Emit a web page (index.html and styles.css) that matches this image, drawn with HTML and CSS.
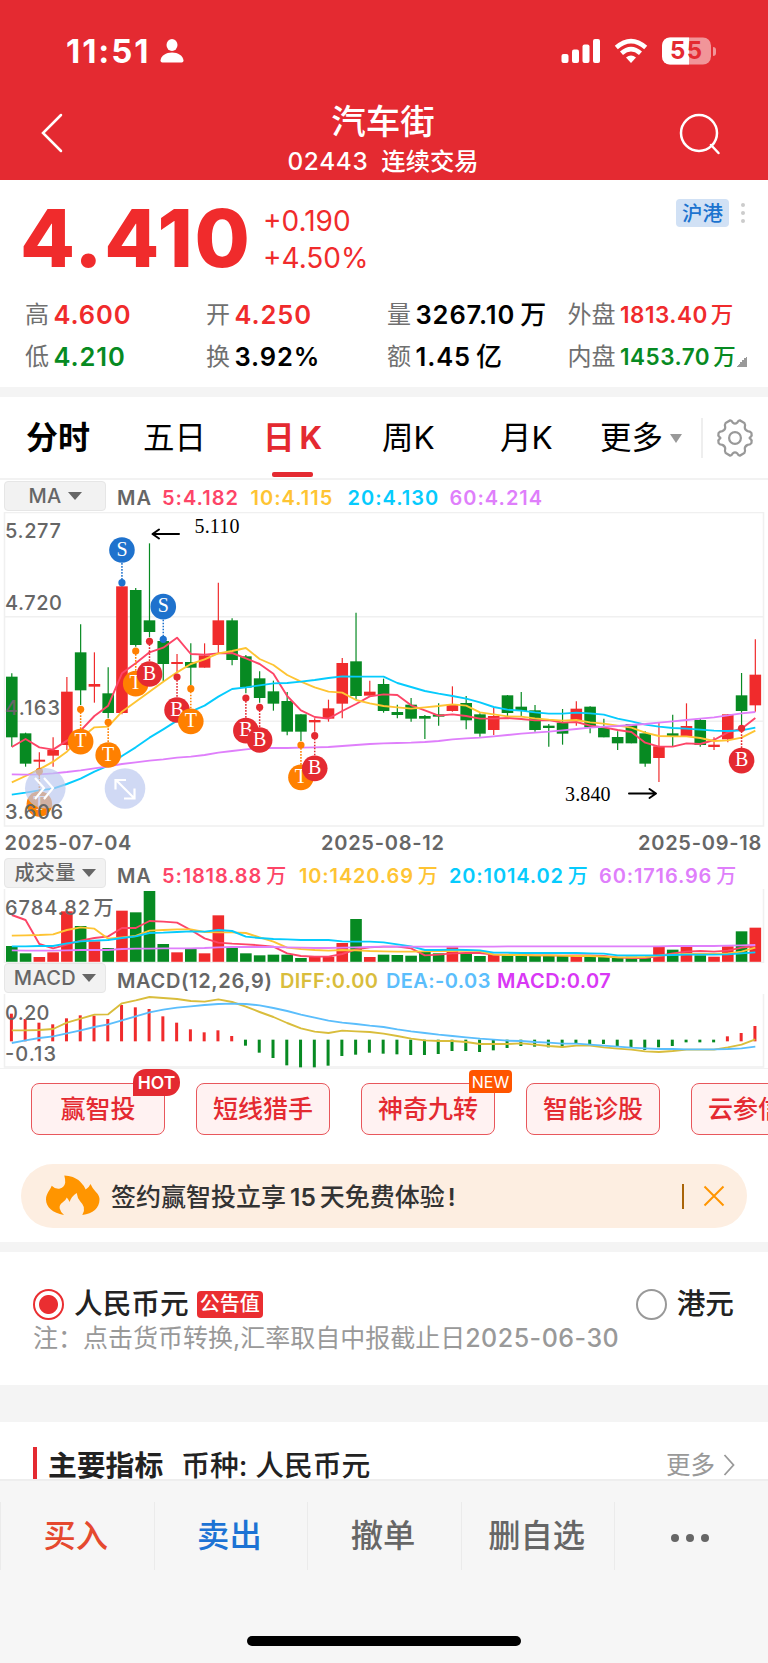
FILE: index.html
```html
<!DOCTYPE html>
<html lang="zh-CN">
<head>
<meta charset="utf-8">
<title>汽车街 02443</title>
<link rel="stylesheet" href="styles.css">
</head>
<body>
<div class="app">
  <header class="header">
    <div class="status">
      <span class="clock">11:51</span>
      <svg class="person" width="24" height="24" viewBox="0 0 24 24"><ellipse cx="12" cy="6" rx="5.5" ry="6"/><path d="M0.5 21.5C1 16.500 6 13.500 12 13.500s11 3 11.500 8q0 1.900-1.800 1.900H2.300Q0.500 23.400 0.500 21.500z"/></svg>
      <svg class="radios" width="152" height="30" viewBox="0 0 152 30">
        <rect x="1.500" y="18" width="7" height="9" rx="2"/><rect x="12" y="13.500" width="7" height="13.500" rx="2"/><rect x="22.500" y="8.500" width="7" height="18.500" rx="2"/><rect x="33" y="3" width="7" height="24" rx="2"/>
        <path d="M71 27l-5-5.500q5-4 10 0z"/>
        <path d="M61.500 17.200q9.500-8.200 19 0M56.300 11.600q14.700-12.800 29.400 0" class="wifi"/>
        <rect x="102" y="1.500" width="49" height="27" rx="8" class="bat-bg"/>
        <path d="M110 1.500h19v27h-19a8 8 0 0 1-8-8v-11a8 8 0 0 1 8-8z"/>
        <text x="110" y="23.300" class="bat-num" textLength="32">55</text>
      </svg>
      <i class="bat-tip"></i>
    </div>
    <div class="titlebar">
      <svg class="back" width="24" height="40" viewBox="0 0 24 40"><path d="M21 2L3 20l18 18"/></svg>
      <div class="titles"><h1>汽车街</h1><p><span class="code">02443</span><span>连续交易</span></p></div>
      <svg class="search" width="44" height="44" viewBox="0 0 44 44"><circle cx="21" cy="21" r="18"/><path d="M33 33l7.500 8"/></svg>
    </div>
  </header>

  <section class="quote">
    <div class="price-row">
      <strong class="price">4.410</strong>
      <div class="chg"><span>+0.190</span><span>+4.50%</span></div>
      <span class="market">沪港</span>
      <span class="kebab"><i></i><i></i><i></i></span>
    </div>
    <div class="stats">
      <div><label>高</label><b class="up">4.600</b></div><div><label>开</label><b class="up">4.250</b></div><div><label>量</label><b>3267.10<em>万</em></b></div><div class="small"><label>外盘</label><b class="up">1813.40<em>万</em></b></div>
      <div><label>低</label><b class="down">4.210</b></div><div><label>换</label><b>3.92%</b></div><div><label>额</label><b>1.45<em>亿</em></b></div><div class="small"><label>内盘</label><b class="down">1453.70<em>万</em></b><i class="corner"></i></div>
    </div>
  </section>

  <nav class="tabs">
    <span class="bold">分时</span><span>五日</span><span class="active">日<em>K</em></span><span>周K</span><span>月K</span><span>更多<i class="tri"></i></span>
    <svg class="gear" width="34" height="36" viewBox="0 0 34 36"><path d="M12.500 2.200Q14 2 15 4.200q2 1.600 4 0Q20 2 21.500 2.200l4 2.400q1 1.400.3 3.700 0 2.500 2.600 3.500 2.600.2 3.400 1.700l.2 2.300-1.800 2.200 1.800 2.200-.2 2.300q-.8 1.500-3.400 1.700-2.600 1-2.600 3.500.7 2.300-.3 3.700l-4 2.400q-1.500.2-2.500-2-2-1.600-4 0-1 2.200-2.500 2l-4-2.400q-1-1.400-.3-3.700 0-2.500-2.600-3.500-2.600-.2-3.400-1.700L2 20.200 3.800 18 2 15.800l.2-2.300q.8-1.500 3.400-1.700 2.600-1 2.600-3.500-.7-2.300.3-3.700z"/><circle cx="17" cy="18" r="5.300"/></svg>
  </nav>

  <section class="charts">
    <div class="legend ma">
      <span class="pick">MA<i></i></span><span class="g">MA</span><span class="c5">5:4.182</span><span class="c10">10:4.115</span><span class="c20">20:4.130</span><span class="c60">60:4.214</span>
    </div>
    <svg id="kline" width="768" height="315" viewBox="0 512 768 315"></svg>
    <div class="dates"><span>2025-07-04</span><span>2025-08-12</span><span>2025-09-18</span></div>
    <div class="legend vol">
      <span class="pick">成交量<i></i></span><span class="g">MA</span><span class="c5">5:1818.88<em>万</em></span><span class="c10">10:1420.69<em>万</em></span><span class="c20">20:1014.02<em>万</em></span><span class="c60">60:1716.96<em>万</em></span>
    </div>
    <svg id="volume" width="768" height="74" viewBox="0 889 768 74"></svg>
    <div class="legend macd">
      <span class="pick">MACD<i></i></span><span class="g">MACD(12,26,9)</span><span class="cdiff">DIFF:0.00</span><span class="cdea">DEA:-0.03</span><span class="cmacd">MACD:0.07</span>
    </div>
    <svg id="macd" width="768" height="74" viewBox="0 994 768 74"></svg>
  </section>

  <section class="chips">
    <span>赢智投<i class="hot">HOT</i></span><span>短线猎手</span><span>神奇九转<i class="new">NEW</i></span><span>智能诊股</span><span>云参信号</span>
  </section>

  <section class="banner">
    <svg width="54" height="42" viewBox="0 0 54 42"><path d="M18.300.5C24 .8 30 2.500 34 6.500Q38 10.500 39.700 14.500 43 12.500 44.500 9q2 4.500 5 7.500 4 4 4 8C53.500 33 47 38.500 36.300 40q2.500-4 1.500-8-1-3-3.500-5.500-3-3.500-3.600-8.500-5 3-7.200 9-1-2.500-2.700-4.500Q20 25 16.500 27.500 13 30 13.700 33.500q.8 3.500 4.300 6.500C6.500 38 0 32 0 24.500 0 18.500 4 15.500 5.700 10.800q3.500 3.500 7.500 3 5-.8 6-6Q19.400 4 18.300.5z"/></svg>
    <p>签约赢智投立享<b>15</b>天免费体验<b class="bang">!</b></p>
    <i class="bar"></i>
    <svg class="close" width="22" height="22" viewBox="0 0 22 22"><path d="M1.500 1.500l19 19M20.500 1.500l-19 19"/></svg>
  </section>

  <section class="currency">
    <div class="choices"><i class="radio on"></i><span>人民币元</span><em>公告值</em><i class="radio off"></i><span>港元</span></div>
    <p>注：点击货币转换,汇率取自中报截止日<b>2025-06-30</b></p>
  </section>

  <section class="metrics">
    <i class="mark"></i><strong>主要指标</strong><span class="kind">币种: 人民币元</span><span class="more">更多</span>
    <svg width="12" height="22" viewBox="0 0 12 22"><path d="M1.500 1l9 10-9 10"/></svg>
  </section>

  <footer class="actions">
    <div class="buttons"><span class="buy">买入</span><span class="sell">卖出</span><span>撤单</span><span>删自选</span><span class="dots"><i></i><i></i><i></i></span></div>
    <i class="home"></i>
  </footer>
</div>
<script src="chart.js"></script>
</body>
</html>
```
FILE: styles.css
```css
* { box-sizing: border-box; }
body { margin: 0; background: #fff; font-family: Inter, "Noto Sans CJK SC", sans-serif; color: #000; }
h1, p { margin: 0; }
i, em { font-style: normal; }
b { font-weight: inherit; }
svg { display: block; flex: none; }
.app { width: 768px; height: 1663px; overflow: hidden; display: flex; flex-direction: column; }
.app > * { flex: none; }

.header { height: 180px; background: #e42a31; color: #fff; display: flex; flex-direction: column; }
.status { height: 102px; padding: 36px 52px 0 66px; display: flex; align-items: flex-start; }
.clock { font-size: 33px; line-height: 31px; font-weight: 700; width: 94px; letter-spacing: 1.9px; white-space: nowrap; }
.person { margin-top: 3px; }
.status svg { fill: #fff; }
.radios { margin-left: auto; }
.status .wifi { fill: none; stroke: #fff; stroke-width: 4.6; }
.status .bat-bg { fill: #f19599; }
.status .bat-num { font-size: 24px; font-weight: 700; fill: #e42a31; }
.bat-tip { width: 3px; height: 9px; margin: 11px 0 0 1px; border-radius: 0 3px 3px 0; background: #f19599; }
.titlebar { height: 78px; padding: 0 44px 0 40px; display: flex; }
.back { margin-top: 11px; }
.back path, .search * { fill: none; stroke: #fff; stroke-width: 2.5; stroke-linecap: round; }
.titles { flex: 1; text-align: center; padding-left: 24px; }
.titles h1 { font-size: 34.500px; font-weight: 500; line-height: 40px; }
.titles p { font-size: 24.300px; line-height: 38px; font-weight: 500; display: flex; justify-content: center; gap: 13px; }
.code { letter-spacing: .7px; }
.search { margin-top: 10px; margin-right: 2px; }

.quote { height: 217px; border-bottom: 10px solid #f4f4f4; padding: 15px 21px 0; }
.price-row { height: 99px; display: flex; align-items: flex-start; color: #f02b2c; }
.price { font-size: 80px; line-height: 86px; font-weight: 800; width: 243px; margin-left: -1px; letter-spacing: 1.8px; }
.chg { display: flex; flex-direction: column; font-size: 28px; line-height: 37px; padding-top: 8px; letter-spacing: 0; }
.market { margin-left: auto; margin-top: 4px; width: 53px; height: 28px; border-radius: 4px; background: #d1e1f5; color: #1c73cf; font-size: 20.500px; font-weight: 500; line-height: 29px; text-align: center; }
.kebab { display: flex; flex-direction: column; gap: 4px; margin: 8px 2px 0 12px; }
.kebab i { width: 4px; height: 4px; border-radius: 50%; background: #ccc; }
.stats { display: grid; grid-template-columns: 181px 181px 180.500px 180px; padding-left: 4px; grid-auto-rows: 42px; }
.stats div { display: flex; align-items: center; white-space: nowrap; gap: 4.500px; line-height: 28px; }
.stats label { font-size: 24px; color: #707070; }
.stats b { font-size: 25.500px; font-weight: 600; letter-spacing: .9px; }
.stats em { margin-left: 5px; font-weight: 500; font-size: 26px; }
.stats .small b { font-size: 22.500px; font-weight: 600; letter-spacing: .5px; }
.stats .small em { margin-left: 3px; font-size: 22.500px; }
.up { color: #f02b2c; }
.down { color: #078a22; }
.corner { width: 11px; height: 11px; margin: 9px 0 0 -5px; background: linear-gradient(135deg, transparent 50%, #999 50%); }

.tabs { height: 83px; border-bottom: 2px solid #f2f2f2; padding-left: 26px; display: grid; grid-template-columns: 117px 120px 119px 118px 100px 101px 67px; align-items: center; font-size: 31.500px; line-height: 86px; }
.tabs .bold { font-weight: 700; font-size: 32px; }
.tabs .active { color: #e42a31; font-weight: 700; position: relative; }
.tabs .active em { margin-left: 5px; }
.tabs .active::after { content: ""; position: absolute; left: 9px; bottom: 2px; width: 41px; height: 5px; border-radius: 2px; background: #e42a31; }
.tabs span { white-space: nowrap; display: flex; align-items: center; height: 82px; }
.tri { border: 6px solid transparent; border-top: 9px solid #999; border-bottom: 0; margin-left: 7px; }
.gear { width: 66px; height: 40px; border-left: 2px solid #eee; fill: none; stroke: #999; stroke-width: 2; }

.charts { font-size: 20px; font-weight: 600; color: #666; }
.legend { display: grid; white-space: nowrap; align-items: start; line-height: 31px; padding-left: 4px; letter-spacing: .4px; }
.legend span:not(.pick) { line-height: 36px; }
.ma { height: 32px; padding-top: 1px; letter-spacing: 1px; grid-template-columns: 113px 45px 88.500px 97px 102px 100px; }
.ma span:not(.pick) { line-height: 34px; }
.vol { height: 31px; letter-spacing: .85px; grid-template-columns: 113px 45px 137px 150px 150px 140px; }
.macd { height: 31px; grid-template-columns: 113px 163px 106px 111px 130px; }
.macd .g { letter-spacing: .65px; }
.pick { width: 102px; height: 30px; background: #f2f2f2; border: 1px solid #e6e6e6; border-radius: 4px; display: flex; align-items: center; justify-content: center; gap: 6px; line-height: 28px; letter-spacing: .4px; font-weight: 500; }
.pick i { border: 7px solid transparent; border-top: 8px solid #666; border-bottom: 0; }
.legend em { margin-left: 4px; font-weight: 500; }
.c5 { color: #fd4567; } .c10 { color: #fec433; } .c20 { color: #06cbfd; } .c60 { color: #df7ffb; }
.cdiff { color: #d9bd3c; } .cdea { color: #5bbefc; } .cmacd { color: #d938f5; }
.dates { height: 31px; padding: 0 4px 0 4.500px; display: grid; grid-template-columns: 316.500px 317px 1fr; line-height: 32px; letter-spacing: .75px; }
.frame { fill: none; stroke: #f0f0f0; stroke-width: 1.5; }
.r { fill: #f02b2c; stroke: #f02b2c; stroke-width: 0; } .gr { fill: #078a22; stroke: #078a22; stroke-width: 0; }
line.r, line.gr { stroke-width: 1.2; }
.ln { fill: none; stroke-width: 1.9; stroke-linejoin: round; }
.axis { font-size: 20px; font-weight: 550; fill: #666; }
.mk { font: 20px "Liberation Serif", serif; fill: #fff; text-anchor: middle; }
.note { font: 20px "Liberation Serif", serif; fill: #000; }
.arrow { fill: none; stroke: #000; stroke-width: 2; stroke-linecap: round; stroke-linejoin: round; }
.knob { fill: #b9c7ef; fill-opacity: .68; }
.ico { fill: none; stroke: #fff; stroke-width: 2.2; }

.chips { height: 96px; border-top: 1px solid #f2f2f2; padding: 14px 0 0 31px; display: flex; gap: 31px; overflow: hidden; }
.chips > span { flex: none; width: 134px; height: 52px; border: 1.500px solid #e8575c; border-radius: 8px; background: #fff2f2; color: #e42a31; font-size: 25px; font-weight: 500; line-height: 50px; text-align: center; position: relative; }
.chips i { position: absolute; color: #fff; text-align: center; }
.hot { right: -16px; top: -15px; width: 47px; height: 27px; border-radius: 13px 13px 13px 0; background: #e42a31; font-size: 17.500px; line-height: 27px; font-weight: 600; }
.new { right: -18px; top: -14.500px; width: 43px; height: 23px; border-radius: 4px 4px 4px 0; background: #ff5500; font-size: 16px; line-height: 24px; font-weight: 400; }

.banner { margin: 0 21px 14px; height: 64px; border-radius: 33px; background: #fdeee1; display: flex; align-items: center; padding: 0 22px 0 25px; }
.banner svg { fill: #ff9500; }
.banner p { margin-left: 11px; font-size: 25px; font-weight: 500; color: #333; line-height: 40px; padding-top: 1px; }
.banner b { margin: 0 4px 0 4px; font-size: 24.500px; font-weight: 600; }
.banner .bang { margin: 0 0 0 3px; }
.bar { margin-left: auto; width: 2px; height: 25px; background: #a96408; }
.banner .close { margin-left: 19px; fill: none; stroke: #ff9500; stroke-width: 2; }

.currency { height: 180px; border-top: 10px solid #f4f4f4; border-bottom: 37px solid #f4f4f4; padding: 34px 34px 0 33px; }
.choices { display: flex; align-items: center; height: 36px; font-size: 28.700px; font-weight: 500; line-height: 36px; color: #222; }
.radio { width: 31px; height: 31px; border-radius: 50%; border: 2px solid #ea2e31; margin-right: 10px; }
.on { background: radial-gradient(circle, #ea2e31 9px, transparent 10px); }
.off { margin-left: auto; border-color: #999; }
.choices em { margin-left: 8px; width: 66px; height: 27px; border-radius: 4px; background: #ea2e31; color: #fff; font-size: 20px; line-height: 26px; text-align: center; }
.currency p { font-size: 25px; line-height: 33px; color: #999; white-space: nowrap; }
.currency b { letter-spacing: .5px; font-weight: 500; }

.metrics { height: 57px; display: flex; padding: 25px 33px 0 33px; font-size: 28.800px; line-height: 37px; color: #222; overflow: hidden; }
.mark { width: 4px; height: 33px; background: #e42a31; margin-right: 11px; }
.metrics strong { font-weight: 700; }
.kind { margin-left: 18px; font-weight: 500; }
.more { margin-left: auto; font-size: 24.500px; line-height: 36px; color: #999; }
.metrics svg { margin: 7px 0 0 8px; fill: none; stroke: #999; stroke-width: 1.8; }

.actions { height: 184px; border-top: 2px solid #eee; background: #f6f6f6; display: flex; flex-direction: column; align-items: center; }
.buttons { width: 768px; margin-top: 21px; height: 67px; display: grid; grid-template-columns: repeat(5, 1fr); font-size: 32.300px; font-weight: 500; color: #666; line-height: 68px; text-align: center; }
.buttons > span { border-left: 1px solid #ebebeb; padding-right: 3px; }
.buttons .buy { color: #e5492f; }
.buttons .sell { color: #1c73d4; }
.dots { display: flex; align-items: center; justify-content: center; gap: 7px; padding-top: 4px; }
.dots i { width: 8px; height: 8px; border-radius: 50%; background: #666; }
.home { width: 274px; height: 10px; border-radius: 5px; background: #000; margin-top: 67px; }
```
FILE: chart.js
```js
// All y values are stored in thirds of a pixel, relative to each chart's origin.
const X0 = 11.8, STEP = 13.769, BAR = 11.6;
const cx = i => X0 + STEP * i;
const n1 = v => v.toFixed(2);

function line(ys, origin, color) {
  const pts = ys.map((y, i) => n1(cx(i)) + ',' + n1(origin + y / 3)).join(' ');
  return `<polyline class="ln" stroke="${color}" points="${pts}"/>`;
}

// direction, high, body top, body bottom, low
const candles = `G520,530,712,740 G698,700,791,800 R757,779,785,830 R712,750,767,800 R531,575,735,750 G373,457,571,615 R457,552,560,608 G502,580,639,655 R256,259,639,643 G264,270,435,440 G130,361,396,412 G420,423,492,543 R462,486,492,520 G430,486,503,555 R430,466,503,503 R248,361,435,460 G355,361,480,496 G465,469,563,580 G514,535,594,608 G542,574,611,632 G576,603,695,706 G643,643,695,723 R655,660,667,695 R599,625,656,665 R474,489,611,655 G338,484,588,600 R542,575,587,587 G536,552,633,638 G614,636,645,655 G594,614,656,665 G645,648,656,717 G610,643,650,677 R559,613,633,635 G588,609,661,688 G640,643,701,710 R624,648,690,705 G585,586,639,650 G576,620,633,650 G615,631,690,695 G672,677,684,740 G627,668,701,734 R604,626,660,677 G619,620,682,700 G656,684,712,712 G694,711,730,750 G672,672,730,730 G694,700,791,800 R667,739,774,846 G644,700,708,738 R610,678,708,708 G656,660,735,740 R712,734,741,750 R642,643,718,727 G519,586,633,680 R418,524,616,635`
  .split(' ').map(s => ({ cls: s[0] === 'R' ? 'r' : 'gr', v: s.slice(1).split(',').map(Number) }));

const priceMA = [
  ['#fd4567', [741,717,742,749,722,692,648,617,520,490,457,443,413,462,464,460,459,475,492,521,588,631,651,656,633,612,589,583,585,616,631,647,643,648,656,656,654,657,661,660,668,666,677,682,690,696,728,740,740,730,732,720,697,686,654]],
  ['#fec433', [847,828,808,785,755,715,682,680,635,605,575,545,517,492,478,460,453,444,477,495,525,545,562,575,578,600,610,618,622,626,622,618,613,617,637,643,649,650,655,659,662,660,667,671,677,683,698,708,709,709,714,723,721,713,692]],
  ['#06cbfd', [884,878,871,866,852,836,815,797,768,742,713,688,662,635,617,590,567,562,556,550,549,545,540,534,529,530,530,530,549,561,573,581,588,596,607,621,629,632,637,641,641,638,640,644,656,664,674,680,684,686,689,692,693,691,683]],
  ['#df7ffb', [823,824,823,820,816,811,805,799,792,787,782,778,773,770,765,758,753,748,744,744,744,743,742,741,738,735,732,730,729,728,726,723,718,715,713,709,705,701,698,695,691,687,683,680,678,675,672,668,664,660,656,652,646,640,636]]
];

// candle index, letter, dot y, badge y
const marks = [[2,'T',814,912],[5,'T',628,725],[7,'T',667,765],[8,'S',248,150],[9,'T',453,551],[10,'B',424,522],[11,'S',418,320],[12,'B',531,630],[13,'T',566,664],[17,'B',594,692],[18,'B',622,720],[21,'T',735,832],[22,'B',707,805],[53,'B',685,782]];
const markColor = { T: '#ff8000', B: '#e42a31', S: '#1f72cd' };

let k = '<path class="frame" d="M4.500 512.500h747.500M4.500 512.500h759v313.500H4.500zM4.500 616.700h759M4.500 721.300h759"/>';
candles.forEach(({ cls, v }, i) => {
  const [h, t, b, l] = v.map(y => 500 + y / 3), x = cx(i);
  k += `<line class="${cls}" x1="${n1(x)}" x2="${n1(x)}" y1="${n1(h)}" y2="${n1(l)}"/><rect class="${cls}" x="${n1(x - BAR / 2)}" y="${n1(t)}" width="${BAR}" height="${n1(b - t)}"/>`;
});
priceMA.forEach(([c, ys]) => { k += line(ys, 500, c); });
marks.forEach(([i, ch, d, m]) => {
  const x = n1(cx(i)), y1 = n1(500 + d / 3), y2 = n1(500 + m / 3), c = markColor[ch];
  k += `<line x1="${x}" x2="${x}" y1="${y1}" y2="${y2}" stroke="${c}" stroke-width="1.5" stroke-dasharray="1.7 1.3"/><circle cx="${x}" cy="${y1}" r="3.6" fill="${c}"/><circle cx="${x}" cy="${y2}" r="12.8" fill="${c}"/><text class="mk" x="${x}" y="${n1(+y2 + 5.6)}">${ch}</text>`;
});
k += '<circle class="knob" cx="45.300" cy="788.300" r="20.300"/><circle class="knob" cx="125" cy="788.500" r="20.300"/>'
  + '<path class="ico" d="M35 778l9 10-9 11M44 778l9 10-9 11M116 780l18 18M115.500 789.500v-9.500h10.500M134.500 788.500v10h-10.500"/>';
[['5.277', 537.5, 56], ['4.720', 610, 57], ['4.163', 714.5, 55], ['3.606', 819.3, 58]].forEach(([t, y, w]) => {
  k += `<text class="axis" x="5" y="${y}" textLength="${w}">${t}</text>`;
});
k += '<text class="note" x="194.500" y="533" textLength="45">5.110</text><path class="arrow" d="M179 534h-26M159 529.500l-6.500 4.500 6.500 4.500"/>'
  + '<text class="note" x="565" y="800.500" textLength="45.500">3.840</text><path class="arrow" d="M629 793.500h26M649.500 789l6.500 4.500-6.500 4.500"/>';
document.getElementById('kline').innerHTML = k;

const volumes = 'G288 G310 R321 R307 R184 G228 R274 G294 R182 G187 G123 G282 R307 G295 R310 R196 G293 G310 G316 G314 G314 G324 R321 R321 R279 G207 R321 G314 G315 G317 G306 G310 R292 G311 G318 R314 G316 G314 G316 G316 G316 R318 G320 G321 G321 G320 G324 R290 G299 R291 G316 R320 R289 G244 R233'.split(' ');
const volumeMA = [
  ['#fd4567', [195,210,282,295,284,272,264,259,234,234,213,215,218,240,265,278,281,283,286,290,310,318,320,320,312,298,292,290,290,295,316,314,310,309,309,314,314,315,316,316,317,316,316,318,322,324,324,318,310,305,303,305,302,293,288]],
  ['#fec433', [257,256,255,253,240,232,236,266,262,258,242,240,238,238,246,247,247,249,262,275,293,297,300,302,300,301,303,304,305,305,304,303,303,302,303,314,315,315,316,316,317,318,318,320,322,322,321,317,314,312,312,312,310,305,293]],
  ['#06cbfd', [289,289,288,288,280,274,272,270,264,259,249,248,246,244,245,240,243,260,264,267,268,270,270,270,274,275,275,277,283,289,300,300,299,300,301,308,308,309,309,309,309,309,310,311,316,316,316,316,315,314,314,314,313,310,307]],
  ['#df7ffb', [301,302,302,302,301,300,300,300,297,296,296,295,295,295,294,292,291,291,291,291,292,293,294,294,293,292,291,290,290,290,290,290,290,290,290,290,289,289,289,289,289,289,289,289,289,289,289,289,288,288,288,288,287,286,285]]
];
let v = '<path class="frame" d="M4.500 889v73.500h759V889"/>';
volumes.forEach((s, i) => {
  const y = 850 + s.slice(1) / 3;
  v += `<rect class="${s[0] === 'R' ? 'r' : 'gr'}" x="${n1(cx(i) - BAR / 2)}" y="${n1(y)}" width="${BAR}" height="${n1(961.8 - y)}"/>`;
});
volumeMA.forEach(([c, ys]) => { v += line(ys, 850, c); });
v += '<text class="axis" x="5" y="914.500" textLength="85">6784.82</text><text class="axis" x="93.500" y="914.500">万</text>';
document.getElementById('volume').innerHTML = v;

const hist = [491,507,518,523,505,496,497,507,465,472,477,499,518,538,547,541,558,587,608,624,646,652,652,647,618,614,608,611,613,615,615,612,603,603,606,601,594,588,590,592,592,582,582,582,590,591,600,592,588,577,577,577,559,549,528];
const diff = [541,541,540,537,518,506,494,493,460,451,441,444,447,453,455,448,456,470,486,501,519,535,545,549,542,544,546,551,558,566,571,573,573,576,582,582,582,580,584,588,591,587,587,592,596,599,604,606,603,599,599,599,592,584,568];
const dea = [579,571,564,559,550,541,531,523,511,499,487,479,473,469,465,462,461,462,466,474,483,494,503,512,518,522,527,531,538,544,549,554,558,562,566,569,572,573,576,578,581,581,584,587,590,593,595,597,597,598,598,598,597,595,590];
let m = '<path class="frame" d="M4.500 994v73h759V994"/>';
hist.forEach((h, i) => {
  const red = h < 570, top = 850 + (red ? h : 569) / 3, bottom = 850 + (red ? 574 : h) / 3;
  m += `<rect class="${red ? 'r' : 'gr'}" x="${n1(cx(i) - 1.9)}" y="${n1(top)}" width="3" height="${n1(bottom - top)}"/>`;
});
m += line(diff, 850, '#d9bd3c') + line(dea, 850, '#5bbefc');
m += '<text class="axis" x="5" y="1020" textLength="44.500">0.20</text><text class="axis" x="5" y="1060.500" textLength="51">-0.13</text>';
document.getElementById('macd').innerHTML = m;
```
